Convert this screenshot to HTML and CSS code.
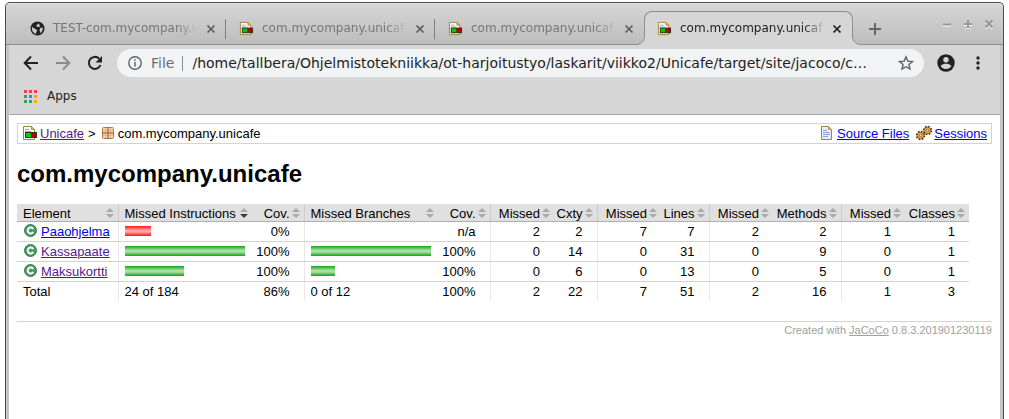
FILE: index.html
```html
<!DOCTYPE html>
<html lang="en">
<head>
<meta charset="utf-8">
<title>com.mycompany.unicafe</title>
<link rel="stylesheet" href="styles.css">
</head>
<body>
<svg class="defs" aria-hidden="true">
  <defs>
    <symbol id="i-report" viewBox="0 0 16 16">
      <path d="M1.500 1.500h8l3 3v10h-11z" fill="#fffef6" stroke="#a58434"/>
      <path d="M9.500 1.500v3h3z" fill="#e8bd6a" stroke="#c08e35"/>
      <path d="M3 4.500h4M3 6.500h6M3 12.500h7" stroke="#8fa6c8"/>
      <rect x="3" y="7" width="12" height="6" fill="#333"/>
      <rect x="4" y="8" width="5" height="4" fill="#0c0"/>
      <rect x="9" y="8" width="5" height="4" fill="#b80000"/>
    </symbol>
    <symbol id="i-package" viewBox="0 0 16 16">
      <rect x="2.500" y="2.500" width="11" height="11" rx="1" fill="#f6d5ab" stroke="#b57b4d"/>
      <path d="M3 5.500h10M3 10.500h10M5.500 3v10M10.500 3v10" stroke="#e6b688"/>
      <path d="M2 8h12M8 2v12" stroke="#8a5634"/>
    </symbol>
    <symbol id="i-source" viewBox="0 0 16 16">
      <path d="M2.500 1.500h7l3 3v10h-10z" fill="#e6eefa" stroke="#9b8448"/>
      <path d="M9.500 1.500v3h3z" fill="#e6bd70" stroke="#bd9247"/>
      <path d="M4 5.500h4M4 7.500h7M4 9.500h7M4 11.500h5" stroke="#8aa4cc"/>
    </symbol>
    <symbol id="i-session" viewBox="0 0 16 16">
      <g fill="none" stroke="#5b3512" stroke-width="1.600" stroke-dasharray="1.700 1.440">
        <circle cx="4.500" cy="10.500" r="4"/>
        <circle cx="11.500" cy="5.500" r="4"/>
      </g>
      <g fill="#f0b643" stroke="#6b4016" stroke-width=".8">
        <circle cx="4.500" cy="10.500" r="3.300"/>
        <circle cx="11.500" cy="5.500" r="3.300"/>
      </g>
      <g fill="#fff" stroke="#6b4016" stroke-width=".8"><circle cx="4.500" cy="10.500" r="1.200"/><circle cx="11.500" cy="5.500" r="1.200"/></g>
    </symbol>
    <symbol id="i-class" viewBox="0 0 16 16">
      <circle cx="7.500" cy="7.500" r="6" fill="#4c9a68" stroke="#2f7d4a"/>
      <path d="M10.200 5.900A3 3 0 1 0 10.200 9.100" fill="none" stroke="#fff" stroke-width="1.900"/>
    </symbol>
    <symbol id="i-close" viewBox="0 0 10 10">
      <path d="M1.500 1.500l7 7M8.500 1.500l-7 7" stroke="currentColor" stroke-width="1.700"/>
    </symbol>
  </defs>
</svg>

<div class="window">
  <header class="titlebar">
    <nav class="tabs" aria-label="Tabs">
      <div class="tab">
        <svg class="favicon" viewBox="0 0 16 16"><circle cx="8" cy="8" r="7.500" fill="#222"/><path d="M2 6.500c2 .5 2.500 2 4.500 2.500 1.500.5 1 2 0 3v1.800C4 13 2 11 2 8zM9.500 2c-.3 1.500-1.500 1.500-2.500 2v2h3l1.500 1.500 2-.5c.5 3-1 5-2.500 6-.3-1.500.3-2.500-1-3l1-2.500" fill="#cbcbcb"/></svg>
        <span class="tab-title">TEST-com.mycompany.u</span>
        <button class="tab-close" aria-label="Close tab"><svg><use href="#i-close"/></svg></button>
      </div>
      <div class="tab">
        <svg class="favicon"><use href="#i-report"/></svg>
        <span class="tab-title">com.mycompany.unicaf</span>
        <button class="tab-close" aria-label="Close tab"><svg><use href="#i-close"/></svg></button>
      </div>
      <div class="tab">
        <svg class="favicon"><use href="#i-report"/></svg>
        <span class="tab-title">com.mycompany.unicaf</span>
        <button class="tab-close" aria-label="Close tab"><svg><use href="#i-close"/></svg></button>
      </div>
      <div class="tab active">
        <svg class="favicon"><use href="#i-report"/></svg>
        <span class="tab-title">com.mycompany.unicaf</span>
        <button class="tab-close" aria-label="Close tab"><svg><use href="#i-close"/></svg></button>
      </div>
      <button class="new-tab" aria-label="New tab"><svg viewBox="0 0 12 12"><path d="M6 0v12M0 6h12" stroke="#666" stroke-width="2"/></svg></button>
    </nav>
    <div class="controls">
      <button aria-label="Minimize"><svg viewBox="0 0 10 10"><path d="M1 6.500h8" stroke="#fff" stroke-width="2"/><path d="M1 5.500h8" stroke="#999" stroke-width="2"/></svg></button>
      <button aria-label="Maximize"><svg viewBox="0 0 10 10"><path d="M1 6h8M5 2v8" stroke="#fff" stroke-width="2"/><path d="M1 5h8M5 1v8" stroke="#999" stroke-width="2"/></svg></button>
      <button aria-label="Close"><svg viewBox="0 0 10 10"><path d="M1.500 2.500l7 7M8.500 2.500l-7 7" stroke="#fff" stroke-width="2"/><path d="M1.500 1.500l7 7M8.500 1.500l-7 7" stroke="#999" stroke-width="2.400"/></svg></button>
    </div>
  </header>

  <div class="toolbar">
    <button class="tool" aria-label="Back"><svg viewBox="0 0 16 16"><path d="M15 8H2M8 1.500L1.700 8 8 14.500" fill="none" stroke="#222" stroke-width="2"/></svg></button>
    <button class="tool" aria-label="Forward"><svg viewBox="0 0 16 16"><path d="M1 8h13M8 1.500L14.300 8 8 14.500" fill="none" stroke="#8b8b8b" stroke-width="2"/></svg></button>
    <button class="tool" aria-label="Reload"><svg viewBox="0 0 16 16"><path d="M13.500 10A6 6 0 1 1 12.200 3.700" fill="none" stroke="#222" stroke-width="2"/><path d="M15 1v6.500H8.500z" fill="#222"/></svg></button>
    <div class="omnibox">
      <svg class="info" viewBox="0 0 14 14"><circle cx="7" cy="7" r="6.200" fill="none" stroke="#5f6368" stroke-width="1.400"/><path d="M7 6v4.500M7 3.300v1.500" stroke="#5f6368" stroke-width="1.500"/></svg>
      <label class="scheme" for="url">File</label>
      <input id="url" class="url" type="text" value="/home/tallbera/Ohjelmistotekniikka/ot-harjoitustyo/laskarit/viikko2/Unicafe/target/site/jacoco/c…">
      <button class="star" aria-label="Bookmark"><svg viewBox="0 0 16 16"><path d="M8 1.800l1.800 4.300 4.700.4-3.600 3 1.100 4.600L8 11.700l-4 2.400 1.100-4.600-3.600-3 4.700-.4z" fill="none" stroke="#5f6368" stroke-width="1.400"/></svg></button>
    </div>
    <button class="profile" aria-label="Profile"><svg viewBox="0 0 18 18"><circle cx="9" cy="9" r="8.700" fill="#222"/><circle cx="9" cy="5.800" r="2.700" fill="#d6d6d6"/><path d="M3.700 12c1-1.700 3.500-2.300 5.300-2.300s4.300.6 5.300 2.300c-1 1.800-3 3-5.300 3s-4.300-1.200-5.300-3z" fill="#d6d6d6"/></svg></button>
    <button class="menu" aria-label="Menu"><svg viewBox="0 0 4 14"><g fill="#222"><circle cx="2" cy="2" r="1.700"/><circle cx="2" cy="7" r="1.700"/><circle cx="2" cy="12" r="1.700"/></g></svg></button>
  </div>

  <div class="bookmarks">
    <button class="apps">
      <svg viewBox="0 0 13 13"><g fill="#f44336"><path d="M0 0h3v3H0zM5 0h3v3H5zM10 0h3v3h-3z"/></g><path d="M0 5h3v3H0zM0 10h3v3H0zM5 10h3v3H5z" fill="#34a05a"/><path d="M5 5h3v3H5z" fill="#2189f3"/><path d="M10 5h3v3h-3zM10 10h3v3h-3z" fill="#f7ab08"/></svg>
      Apps
    </button>
  </div>

  <main class="page">
    <div class="breadcrumb">
      <div class="crumbs">
        <span><svg class="el"><use href="#i-report"/></svg><a class="visited" href="#">Unicafe</a></span>
        <span>&gt;</span>
        <span><svg class="el"><use href="#i-package"/></svg>com.mycompany.unicafe</span>
      </div>
      <div class="info-links">
        <span><svg class="el"><use href="#i-source"/></svg><a href="#">Source Files</a></span>
        <span><svg class="el"><use href="#i-session"/></svg><a href="#">Sessions</a></span>
      </div>
    </div>

    <h1>com.mycompany.unicafe</h1>

    <table class="coverage">
      <colgroup>
        <col class="c-element">
        <col class="c-bar"><col class="c-cov">
        <col class="c-bar"><col class="c-cov">
        <col class="c-missed"><col class="c-cxty">
        <col class="c-missed"><col class="c-lines">
        <col class="c-missed"><col class="c-methods">
        <col class="c-missed"><col class="c-classes">
      </colgroup>
      <thead>
        <tr>
          <th>Element</th>
          <th class="bar down">Missed Instructions</th><th class="ctr2">Cov.</th>
          <th class="bar">Missed Branches</th><th class="ctr2">Cov.</th>
          <th class="ctr1">Missed</th><th class="ctr2">Cxty</th>
          <th class="ctr1">Missed</th><th class="ctr2">Lines</th>
          <th class="ctr1">Missed</th><th class="ctr2">Methods</th>
          <th class="ctr1">Missed</th><th class="ctr2">Classes</th>
        </tr>
      </thead>
      <tbody>
        <tr>
          <td><svg class="el"><use href="#i-class"/></svg><a href="#">Paaohjelma</a></td>
          <td class="bar"><span class="meter red" style="width:26px"></span></td><td class="ctr2">0%</td>
          <td class="bar"></td><td class="ctr2">n/a</td>
          <td class="ctr1">2</td><td class="ctr2">2</td>
          <td class="ctr1">7</td><td class="ctr2">7</td>
          <td class="ctr1">2</td><td class="ctr2">2</td>
          <td class="ctr1">1</td><td class="ctr2">1</td>
        </tr>
        <tr>
          <td><svg class="el"><use href="#i-class"/></svg><a class="visited" href="#">Kassapaate</a></td>
          <td class="bar"><span class="meter green" style="width:120px"></span></td><td class="ctr2">100%</td>
          <td class="bar"><span class="meter green" style="width:120px"></span></td><td class="ctr2">100%</td>
          <td class="ctr1">0</td><td class="ctr2">14</td>
          <td class="ctr1">0</td><td class="ctr2">31</td>
          <td class="ctr1">0</td><td class="ctr2">9</td>
          <td class="ctr1">0</td><td class="ctr2">1</td>
        </tr>
        <tr>
          <td><svg class="el"><use href="#i-class"/></svg><a class="visited" href="#">Maksukortti</a></td>
          <td class="bar"><span class="meter green" style="width:59px"></span></td><td class="ctr2">100%</td>
          <td class="bar"><span class="meter green" style="width:24px"></span></td><td class="ctr2">100%</td>
          <td class="ctr1">0</td><td class="ctr2">6</td>
          <td class="ctr1">0</td><td class="ctr2">13</td>
          <td class="ctr1">0</td><td class="ctr2">5</td>
          <td class="ctr1">0</td><td class="ctr2">1</td>
        </tr>
      </tbody>
      <tfoot>
        <tr>
          <td>Total</td>
          <td class="bar">24 of 184</td><td class="ctr2">86%</td>
          <td class="bar">0 of 12</td><td class="ctr2">100%</td>
          <td class="ctr1">2</td><td class="ctr2">22</td>
          <td class="ctr1">7</td><td class="ctr2">51</td>
          <td class="ctr1">2</td><td class="ctr2">16</td>
          <td class="ctr1">1</td><td class="ctr2">3</td>
        </tr>
      </tfoot>
    </table>

    <footer class="footer">Created with <a href="#">JaCoCo</a> 0.8.3.201901230119</footer>
  </main>
</div>
</body>
</html>
```
FILE: styles.css
```css
* { box-sizing: border-box; }

body {
  margin: 0;
  padding: 2px 5px 0;
  min-height: 100vh;
  display: flex;
  background: #fff;
  font-family: "Liberation Sans", Arial, sans-serif;
  font-size: 13px;
  line-height: 15px;
  color: #000;
}

.defs { position: absolute; width: 0; height: 0; }

button {
  display: flex;
  align-items: center;
  justify-content: center;
  margin: 0;
  padding: 0;
  border: 0;
  background: none;
  font: inherit;
  color: inherit;
}

.window {
  flex: 1;
  min-width: 0;
  display: flex;
  flex-direction: column;
  border: 1px solid #4b4b4b;
  border-bottom: 0;
  border-radius: 5px 5px 0 0;
  background: #c6c4c4;
  overflow: hidden;
}

/* Browser chrome */
.titlebar,
.toolbar,
.bookmarks { font-family: "DejaVu Sans", sans-serif; }

.titlebar {
  display: flex;
  justify-content: space-between;
  height: 42px;
  padding: 8px 9px 0 11px;
  border-bottom: 1px solid #8e8e8e;
  border-top: 1px solid #e6e6e6;
  background: linear-gradient(#d6d6d6, #bdbdbd);
}

.tabs { display: flex; flex: 1; min-width: 0; }

.tab {
  position: relative;
  flex: 0 1 209px;
  min-width: 0;
  height: 33px;
  display: flex;
  align-items: center;
  padding: 0 10px 0 13px;
  color: #777;
}

.tab:not(.active)::after {
  content: "";
  position: absolute;
  right: 0;
  top: 7px;
  width: 1px;
  height: 20px;
  background: #808080;
}

.tab:nth-child(3)::after { display: none; }

.tab.active {
  height: 34px;
  margin-top: -1px;
  padding-left: 12px;
  border: 1px solid #8e8e8e;
  border-bottom: 0;
  border-radius: 8px 8px 0 0;
  background: #d6d6d6;
  color: #222;
}

.tab.active::before,
.tab.active::after {
  content: "";
  position: absolute;
  bottom: 0;
  width: 9px;
  height: 9px;
}

.tab.active::before {
  left: -9px;
  background: radial-gradient(circle at 0 0, transparent 8px, #8e8e8e 8px, #8e8e8e 9px, #d6d6d6 9px);
}

.tab.active::after {
  right: -9px;
  background: radial-gradient(circle at 100% 0, transparent 8px, #8e8e8e 8px, #8e8e8e 9px, #d6d6d6 9px);
}

.favicon { flex: none; width: 15px; height: 15px; }

.tab-title {
  flex: 1;
  min-width: 0;
  margin: 0 4px 0 8px;
  font-size: 12px;
  white-space: nowrap;
  -webkit-mask-image: linear-gradient(to right, #000 124px, transparent 145px);
  mask-image: linear-gradient(to right, #000 124px, transparent 145px);
}

.tab-close { flex: none; width: 10px; height: 10px; color: #5c5c5c; }
.tab.active .tab-close { color: #222; }
.tab-close svg { width: 10px; height: 10px; }

.new-tab { width: 44px; height: 33px; }
.new-tab svg { width: 12px; height: 12px; }

.controls { display: flex; gap: 11px; height: 24px; align-items: center; }
.controls svg { width: 10px; height: 10px; }

.toolbar {
  display: flex;
  align-items: center;
  height: 36px;
  margin: 0 3px;
  padding: 0 20px 0 14px;
  background: #d6d6d6;
}

.tool { width: 16px; height: 16px; margin-right: 16px; }
.tool svg { width: 16px; height: 16px; }

.omnibox {
  flex: 1;
  min-width: 0;
  display: flex;
  align-items: center;
  height: 28px;
  margin-left: -2px;
  padding: 0 10px 0 11px;
  border-radius: 14px;
  background: #f1f3f4;
  font-size: 14px;
}

.info { flex: none; width: 14px; height: 14px; }

.scheme {
  margin-left: 9px;
  padding-right: 8px;
  border-right: 1px solid #8a8d91;
  color: #6b6f74;
}

.url {
  flex: 1;
  min-width: 0;
  margin: 0 12px 0 9px;
  padding: 0;
  border: 0;
  outline: 0;
  background: none;
  font: inherit;
  color: #222;
}

.star svg { width: 16px; height: 16px; }
.profile { margin-left: 13px; }
.profile svg { width: 18px; height: 18px; }
.menu { margin-left: 21px; }
.menu svg { width: 4px; height: 14px; }

.bookmarks {
  display: flex;
  height: 34px;
  margin: 0 3px;
  padding: 0 15px;
  border-bottom: 1px solid #a8a8a8;
  background: #d6d6d6;
}

.apps { gap: 10px; height: 30px; font-size: 12px; color: #222; }
.apps svg { width: 13px; height: 13px; }

/* Coverage report */
.page {
  flex: 1;
  margin: 0 3px;
  padding: 8px;
  background: #fff;
}

a { color: #0000ee; }
a.visited { color: #551a8b; }

.el {
  width: 16px;
  height: 16px;
  margin: -1px 2px -1px 0;
  vertical-align: top;
}

.breadcrumb {
  display: flex;
  justify-content: space-between;
  padding: 2px 4px;
  border: 1px solid #d6d3ce;
  line-height: 15px;
}

.crumbs { display: flex; gap: 4px; }
.info-links { display: flex; gap: 7px; }

h1 {
  margin: 16px 0;
  font-size: 24px;
  line-height: 28px;
  font-weight: bold;
}

.coverage { border-collapse: collapse; }

.c-element { width: 101px; }
.c-bar { width: 134px; }
.c-cov { width: 52px; }
.c-missed { width: 64px; }
.c-cxty { width: 43px; }
.c-lines { width: 48px; }
.c-methods { width: 68px; }
.c-classes { width: 64px; }

.coverage th {
  padding: 2px 14px 0 6px;
  border-bottom: 1px solid #b0b0b0;
  background: #e0e0e0 url("data:image/svg+xml,%3Csvg xmlns='http://www.w3.org/2000/svg' width='12' height='10'%3E%3Cpath d='M0 4h8L4 0zM0 6h8L4 10z' fill='%23aaa'/%3E%3C/svg%3E") no-repeat right center;
  font-weight: normal;
  text-align: left;
  white-space: nowrap;
}

.coverage th.down {
  background-image: url("data:image/svg+xml,%3Csvg xmlns='http://www.w3.org/2000/svg' width='12' height='10'%3E%3Cpath d='M0 4h8L4 0z' fill='%23aaa'/%3E%3Cpath d='M0 6h8L4 10z' fill='%23443a30'/%3E%3C/svg%3E");
}

.coverage td {
  padding: 2px 6px;
  border-bottom: 1px solid #d6d3ce;
  white-space: nowrap;
}

.coverage tfoot td { border-bottom: 0; }

.coverage .bar,
.coverage .ctr1 { border-left: 1px solid #e8e8e8; }

.coverage th.bar,
.coverage th.ctr1 { border-left-color: #ccc; }

.coverage .ctr1,
.coverage .ctr2 { padding-right: 14px; text-align: right; }

.coverage .ctr2,
.coverage th.ctr1 { padding-left: 2px; }

.meter { display: block; height: 10px; margin: 2px 0 3px; }
.red { background: linear-gradient(#ff1a1a, #ff5454 20%, #ffa0a0 40%, #ffa8a8 60%, #ff5454 80%, #ff1a1a); }
.green { background: linear-gradient(#14a714, #55bd55 20%, #a0dfa0 40%, #a8e2a8 60%, #55bd55 80%, #14a714); }

.footer {
  margin-top: 20px;
  padding-top: 2px;
  border-top: 1px solid #d6d3ce;
  font-size: 11px;
  line-height: 13px;
  text-align: right;
  color: #a0a0a0;
}

.footer a { color: #a0a0a0; }
```
